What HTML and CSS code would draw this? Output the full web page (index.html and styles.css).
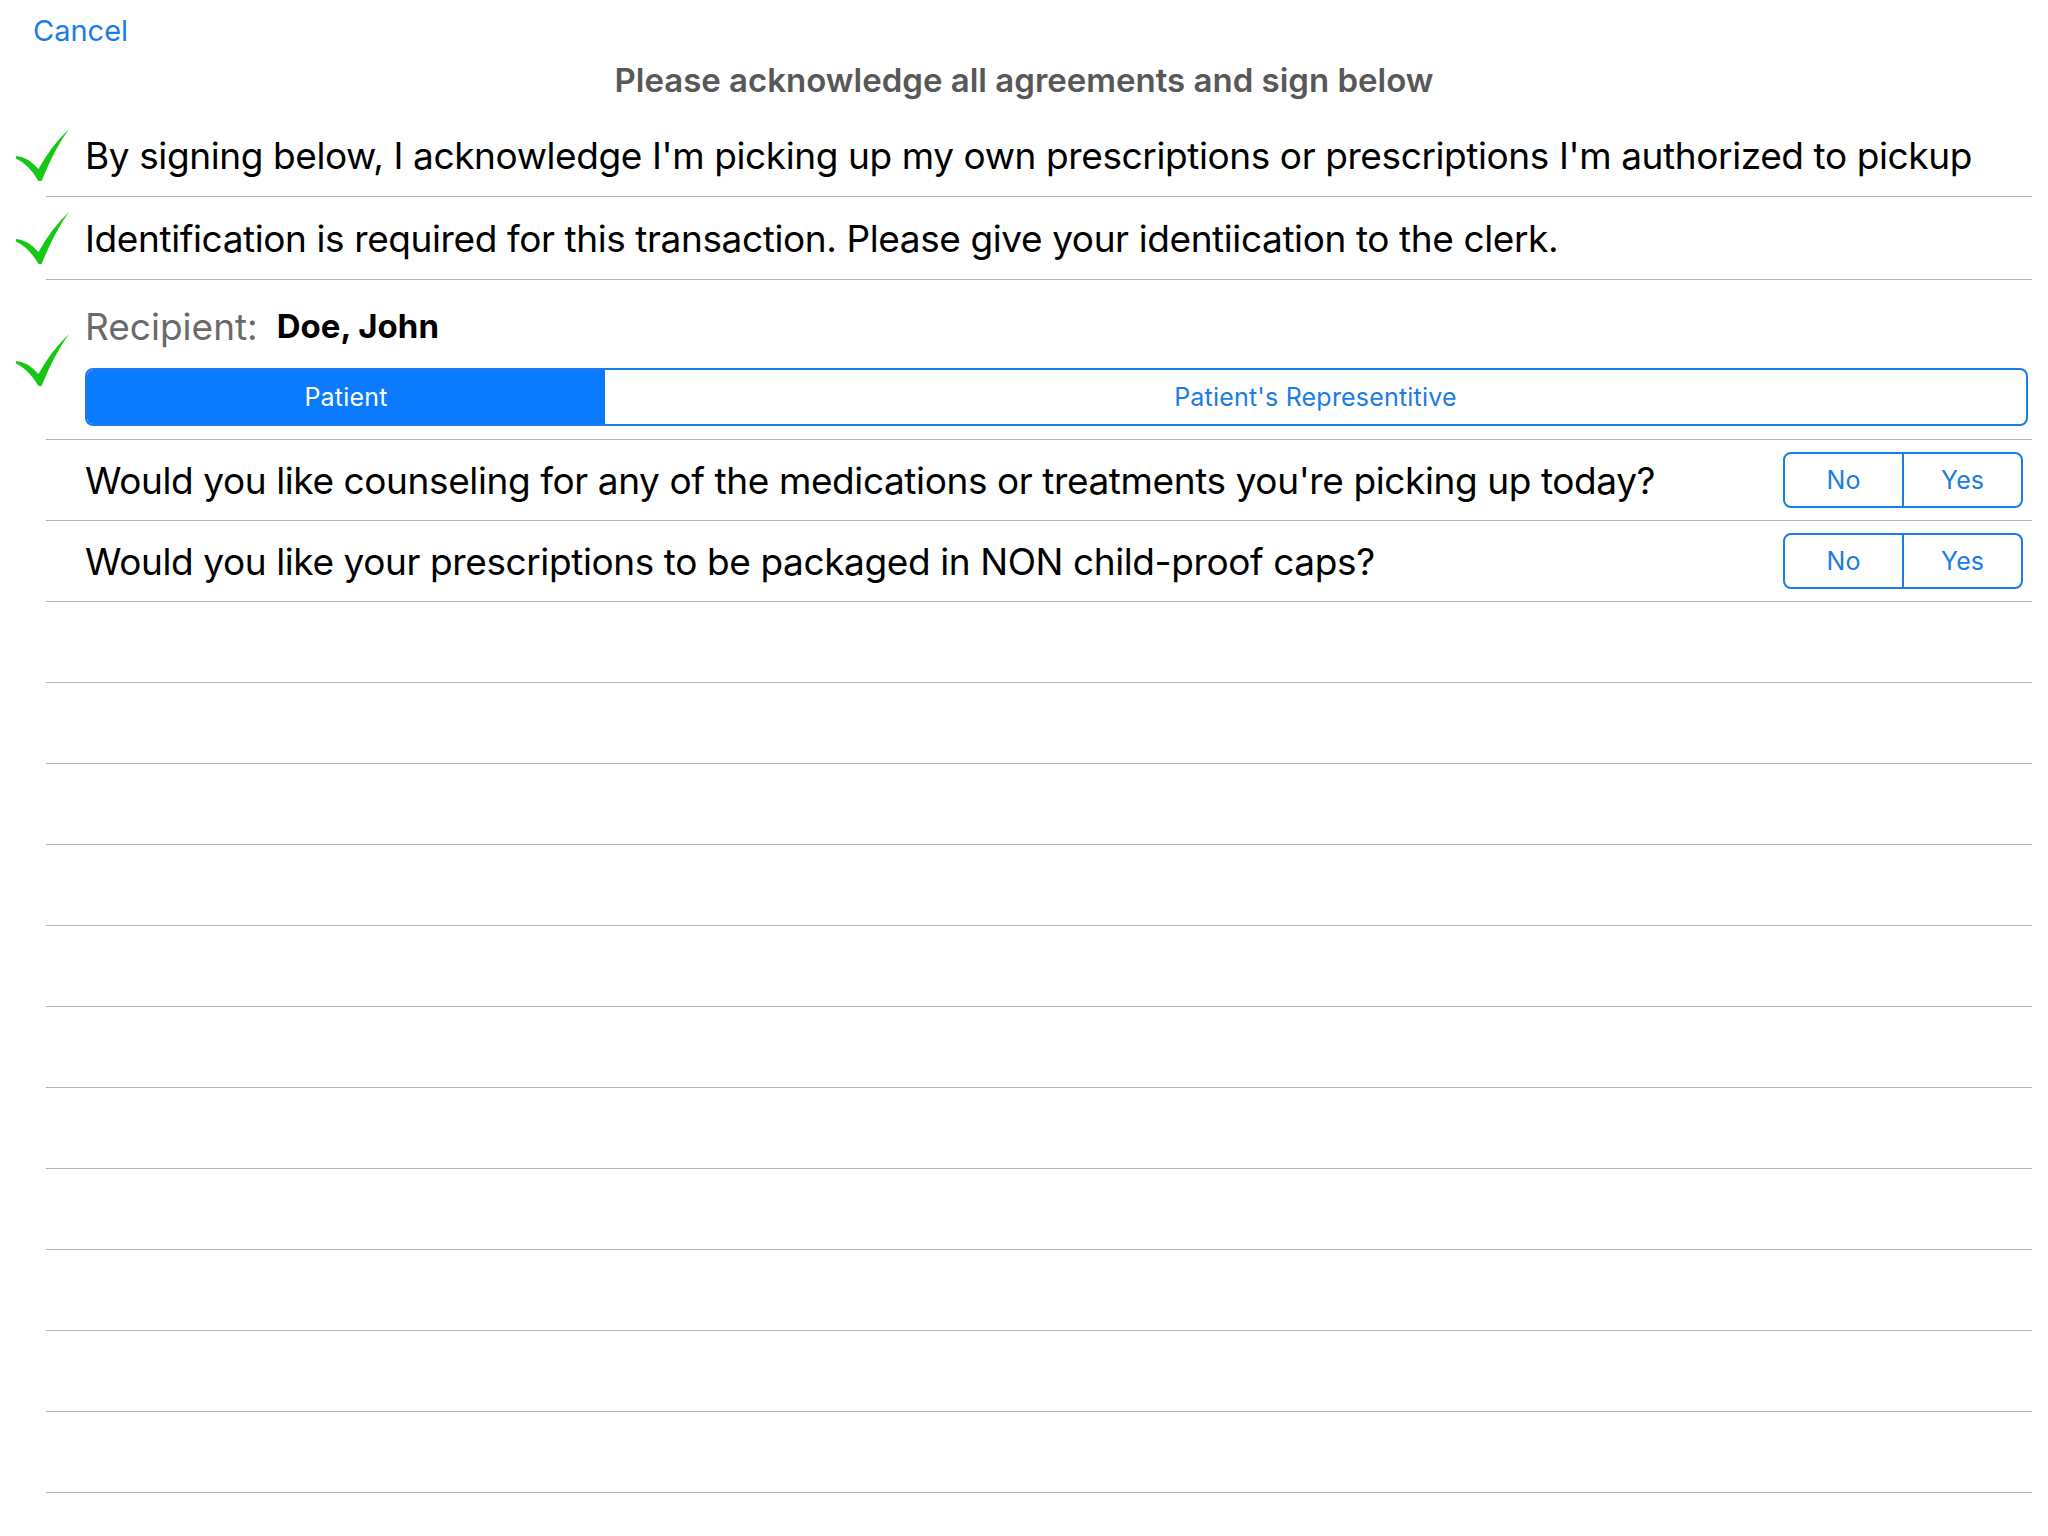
FILE: index.html
```html
<!DOCTYPE html>
<html>
<head>
<meta charset="utf-8">
<link rel="stylesheet" href="styles.css">
</head>
<body>
<div class="page">
  <div class="topbar"><span class="cancel">Cancel</span></div>
  <div class="title">Please acknowledge all agreements and sign below</div>
  <div class="list">
    <div class="row check-row r1">
      <svg class="check" viewBox="0 0 53 52"><path d="M0,27 Q11,27.5 22.5,40 Q35,17 53,0 Q39,19 25.5,52 L22.5,52 Q13,35.5 0,29.5 Z"/></svg>
      <div class="text">By signing below, I acknowledge I'm picking up my own prescriptions or prescriptions I'm authorized to pickup</div>
    </div>
    <div class="row check-row r2">
      <svg class="check" viewBox="0 0 53 52"><path d="M0,27 Q11,27.5 22.5,40 Q35,17 53,0 Q39,19 25.5,52 L22.5,52 Q13,35.5 0,29.5 Z"/></svg>
      <div class="text">Identification is required for this transaction. Please give your identiication to the clerk.</div>
    </div>
    <div class="row check-row r3">
      <svg class="check" viewBox="0 0 53 52"><path d="M0,27 Q11,27.5 22.5,40 Q35,17 53,0 Q39,19 25.5,52 L22.5,52 Q13,35.5 0,29.5 Z"/></svg>
      <div class="recipient-col">
        <div class="recipient"><span class="rlabel">Recipient:</span><span class="rname">Doe, John</span></div>
        <div class="segmented">
          <div class="seg seg-patient selected">Patient</div>
          <div class="seg seg-rep">Patient's Representitive</div>
        </div>
      </div>
    </div>
    <div class="row q-row">
      <div class="text">Would you like counseling for any of the medications or treatments you're picking up today?</div>
      <div class="yesno"><div class="yn">No</div><div class="yn">Yes</div></div>
    </div>
    <div class="row q-row">
      <div class="text">Would you like your prescriptions to be packaged in NON child-proof caps?</div>
      <div class="yesno"><div class="yn">No</div><div class="yn">Yes</div></div>
    </div>
    <div class="row empty"></div>
    <div class="row empty"></div>
    <div class="row empty"></div>
    <div class="row empty"></div>
    <div class="row empty"></div>
    <div class="row empty"></div>
    <div class="row empty"></div>
    <div class="row empty"></div>
    <div class="row empty"></div>
    <div class="row empty"></div>
    <div class="row empty"></div>
  </div>
</div>
</body>
</html>
```

FILE: styles.css
```css
html, body {
  margin: 0;
  padding: 0;
  background: #ffffff;
}
.page {
  width: 2048px;
  height: 1536px;
  font-family: Inter, "Noto Sans", sans-serif;
  color: #000;
  overflow: hidden;
}
.topbar {
  height: 60px;
  padding-left: 33px;
  display: flex;
  align-items: center;
}
.cancel {
  font-size: 29px;
  color: #1a7ce6;
  line-height: 1;
}
.title {
  height: 40px;
  line-height: 40px;
  text-align: center;
  font-size: 33px;
  font-weight: 600;
  color: #585858;
  margin-bottom: 14px;
}
.list {
  margin-left: 46px;
  margin-right: 16px;
}
.row {
  display: flex;
  align-items: center;
  border-bottom: 1px solid #b4b4b4;
}
.check {
  width: 53px;
  height: 52px;
  margin-left: -30px;
  margin-right: 16px;
  flex: none;
  fill: #14c814;
}
.text {
  font-size: 37px;
  letter-spacing: -0.4px;
  white-space: nowrap;
}
.r1 { height: 82px; }
.r2 { height: 82px; }
.r3 { height: 159px; }
.recipient-col {
  flex: 1;
  align-self: flex-start;
  display: flex;
  flex-direction: column;
  padding-top: 24px;
}
.recipient {
  height: 44px;
  display: flex;
  align-items: center;
  margin-bottom: 20px;
}
.rlabel {
  font-size: 37px;
  color: #6a6a6a;
}
.rname {
  font-size: 33px;
  font-weight: 700;
  margin-left: 19px;
}
.segmented {
  display: flex;
  height: 54px;
  margin-right: 4px;
  border: 2px solid #1a7ce6;
  border-radius: 8px;
  overflow: hidden;
}
.seg {
  display: flex;
  align-items: center;
  justify-content: center;
  font-size: 25px;
  color: #1a7ce6;
  letter-spacing: 0.2px;
}
.seg-patient {
  width: 518px;
  flex: none;
}
.seg-rep {
  flex: 1;
}
.seg.selected {
  background: #0a7bff;
  color: #ffffff;
}
.q-row {
  height: 80px;
  padding-left: 39px;
  justify-content: space-between;
}
.yesno {
  display: flex;
  width: 236px;
  height: 52px;
  margin-right: 9px;
  border: 2px solid #1a7ce6;
  border-radius: 8px;
}
.yn {
  flex: 1;
  display: flex;
  align-items: center;
  justify-content: center;
  font-size: 25px;
  color: #1a7ce6;
}
.yn + .yn {
  border-left: 2px solid #1a7ce6;
}
.empty {
  height: 80px;
}
```
